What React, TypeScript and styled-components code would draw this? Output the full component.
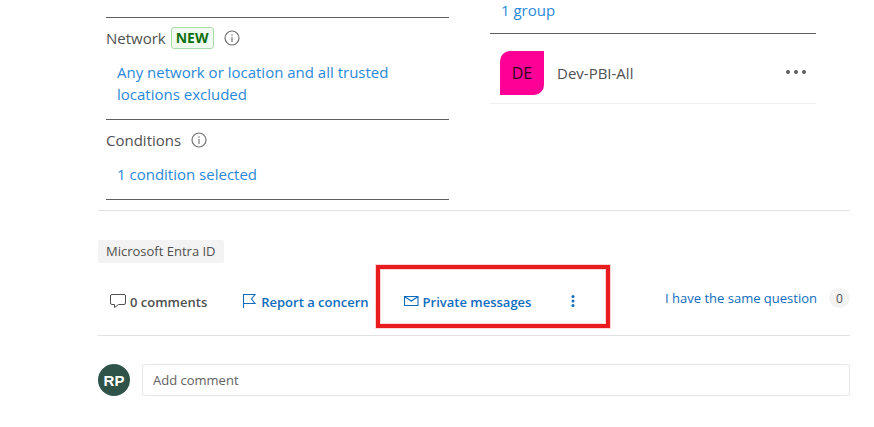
import React from "react";
import styled, { createGlobalStyle } from "styled-components";

const GlobalStyle = createGlobalStyle`
  * { box-sizing: border-box; }
  body {
    margin: 0;
    background: #fff;
    color: #505050;
    font-family: "Open Sans", "Noto Sans", sans-serif;
    font-size: 13px;
  }
  button, input { font: inherit; }
`;

const Page = styled.main`
  padding: 0 24px 30px 98px;
`;

const Policy = styled.section`
  display: grid;
  grid-template-columns: 343fr 326fr;
  column-gap: 41px;
  padding: 0 34px 10px 8px;
  border-bottom: 1px solid #e1e1e1;
  font-size: 15px;
  line-height: 22px;
`;

const Column = styled.div`
  min-width: 0;
`;

const PreviousEnd = styled.div`
  height: 18px;
  border-bottom: 1px solid #605e5c;
`;

const Setting = styled.div`
  padding: 9px 0 14px;
  border-bottom: 1px solid #605e5c;
`;

const SettingTitle = styled.div`
  display: flex;
  align-items: center;
  height: 22px;
  margin-bottom: 12px;
`;

const NewBadge = styled.span`
  margin-left: 5px;
  padding: 0 4px;
  border: 1px solid #a9dba9;
  border-radius: 3px;
  background: #f1faf1;
  color: #0e700e;
  font-size: 14px;
  font-weight: 700;
  line-height: 20px;
`;

const InfoIcon = styled.svg`
  width: 16px;
  height: 16px;
  margin-left: 10px;
`;

const SettingLink = styled.a`
  display: block;
  margin: 0 40px 0 11px;
  color: #2b88d8;
  text-decoration: none;
`;

const GroupCount = styled.div`
  height: 34px;
  border-bottom: 1px solid #605e5c;
  line-height: 20px;
`;

const Member = styled.div`
  display: flex;
  align-items: center;
  height: 70px;
  padding: 8px 9px 0 10px;
  border-bottom: 1px solid #f0f0f0;
`;

const MemberTile = styled.span`
  display: grid;
  place-items: center;
  width: 44px;
  height: 44px;
  margin-right: 13px;
  border-radius: 10px 0;
  background: #ff0097;
  color: #2b0a1e;
  font-size: 16px;
`;

const IconButton = styled.button`
  display: flex;
  padding: 0;
  border: 0;
  background: none;
  color: inherit;
  cursor: pointer;
`;

const MemberMenu = styled(IconButton)`
  margin-left: auto;
  padding-bottom: 2px;
`;

const Footer = styled.section`
  padding: 29px 0 7px;
  border-bottom: 1px solid #e1e1e1;
`;

const Tag = styled.a`
  display: block;
  width: fit-content;
  margin-bottom: 2px;
  padding: 0 8px;
  border-radius: 2px;
  background: #f3f3f3;
  color: #505050;
  line-height: 23px;
  text-decoration: none;
`;

const Actions = styled.div`
  display: flex;
  align-items: center;
  height: 63px;
  padding-left: 12px;
`;

const Action = styled.button<{ $muted?: boolean }>`
  display: flex;
  align-items: center;
  gap: 4px;
  padding: 10px 0 0;
  border: 0;
  background: none;
  color: ${(p) => (p.$muted ? "#505050" : "#0f6cbd")};
  font-weight: 600;
  line-height: 20px;
  white-space: nowrap;
  cursor: pointer;

  & + & { margin-left: 35px; }
  svg { margin-bottom: 2px; }
`;

const Highlight = styled.div`
  display: flex;
  align-items: center;
  width: 234px;
  height: 63px;
  margin-left: 7px;
  padding: 0 31px 0 24px;
  border: 4px solid #e81c1f;
  box-shadow: 0 0 0 1px #fbd5d5, inset 0 0 0 1px #fbd5d5;
  color: #0f6cbd;
`;

const MoreButton = styled(IconButton)`
  margin-left: auto;
  padding-top: 8px;
`;

const SameQuestion = styled.button`
  display: flex;
  align-items: center;
  gap: 12px;
  margin-left: auto;
  padding: 3px 0 0;
  border: 0;
  background: none;
  color: #0f6cbd;
  white-space: nowrap;
  cursor: pointer;
`;

const Count = styled.span`
  display: grid;
  place-items: center;
  width: 21px;
  height: 20px;
  border-radius: 10px;
  background: #f3f3f3;
  color: #505050;
  font-size: 12px;
`;

const CommentForm = styled.form`
  display: flex;
  align-items: center;
  gap: 12px;
  padding-top: 28px;
`;

const UserAvatar = styled.span`
  display: grid;
  place-items: center;
  width: 32px;
  height: 32px;
  border-radius: 50%;
  background: #2f5349;
  color: #fff;
  font-family: "Liberation Sans", sans-serif;
  font-size: 15px;
  font-weight: 700;
`;

const CommentInput = styled.input`
  flex: 1;
  min-width: 0;
  height: 32px;
  padding: 0 10px;
  border: 1px solid #e6e6e6;
  border-radius: 3px;
  color: #505050;

  &::placeholder { color: #616161; opacity: 1; }
`;

const Info = () => (
  <InfoIcon viewBox="0 0 16 16" fill="none" stroke="#707070" aria-hidden="true">
    <circle cx="8" cy="8" r="7" strokeWidth="1.2" />
    <path d="M8 7v5M8 4.300v1.400" strokeWidth="1.1" />
  </InfoIcon>
);

const CommentIcon = () => (
  <svg width="16" height="16" viewBox="0 0 16 16" fill="none" stroke="currentColor" aria-hidden="true">
    <path d="M2 1.500h12a1.500 1.500 0 0 1 1.500 1.500v7a1.500 1.500 0 0 1-1.500 1.500H8.500L4.500 14.500V11.500H2A1.500 1.500 0 0 1 .5 10V3A1.500 1.500 0 0 1 2 1.500z" />
  </svg>
);

const FlagIcon = () => (
  <svg width="15" height="16" viewBox="0 0 15 16" fill="none" stroke="currentColor" strokeWidth="1.1" aria-hidden="true">
    <path d="M1.500 15V1.500H13L9.500 6l3.500 4.500H1.500" />
  </svg>
);

const MailIcon = () => (
  <svg width="15" height="14" viewBox="0 0 15 14" fill="none" stroke="currentColor" strokeWidth="1.1" aria-hidden="true">
    <path d="M.5 2.500h13.500v9H.5zM.7 2.700l6.600 4.300 6.500-4.300" />
  </svg>
);

export default function App() {
  return (
    <>
      <GlobalStyle />
      <Page>
        <Policy>
          <Column>
            <PreviousEnd />
            <Setting>
              <SettingTitle>
                Network
                <NewBadge>NEW</NewBadge>
                <Info />
              </SettingTitle>
              <SettingLink href="#network">
                Any network or location and all trusted locations excluded
              </SettingLink>
            </Setting>
            <Setting>
              <SettingTitle>
                Conditions
                <Info />
              </SettingTitle>
              <SettingLink href="#conditions">1 condition selected</SettingLink>
            </Setting>
          </Column>
          <Column>
            <GroupCount>
              <SettingLink href="#group">1 group</SettingLink>
            </GroupCount>
            <Member>
              <MemberTile>DE</MemberTile>
              Dev-PBI-All
              <MemberMenu type="button" aria-label="Member options">
                <svg width="22" height="6" viewBox="0 0 22 6" fill="#555" aria-hidden="true">
                  <circle cx="3" cy="3" r="1.900" />
                  <circle cx="11" cy="3" r="1.900" />
                  <circle cx="19" cy="3" r="1.900" />
                </svg>
              </MemberMenu>
            </Member>
          </Column>
        </Policy>
        <Footer>
          <Tag href="#entra">Microsoft Entra ID</Tag>
          <Actions>
            <Action type="button" $muted>
              <CommentIcon />0 comments
            </Action>
            <Action type="button">
              <FlagIcon />Report a concern
            </Action>
            <Highlight>
              <Action type="button">
                <MailIcon />Private messages
              </Action>
              <MoreButton type="button" aria-label="More actions">
                <svg width="4" height="14" viewBox="0 0 4 14" fill="currentColor" aria-hidden="true">
                  <circle cx="2" cy="2.500" r="1.500" />
                  <circle cx="2" cy="7" r="1.500" />
                  <circle cx="2" cy="11.500" r="1.500" />
                </svg>
              </MoreButton>
            </Highlight>
            <SameQuestion type="button">
              I have the same question
              <Count>0</Count>
            </SameQuestion>
          </Actions>
        </Footer>
        <CommentForm>
          <UserAvatar>RP</UserAvatar>
          <CommentInput aria-label="Add comment" placeholder="Add comment" />
        </CommentForm>
      </Page>
    </>
  );
}
